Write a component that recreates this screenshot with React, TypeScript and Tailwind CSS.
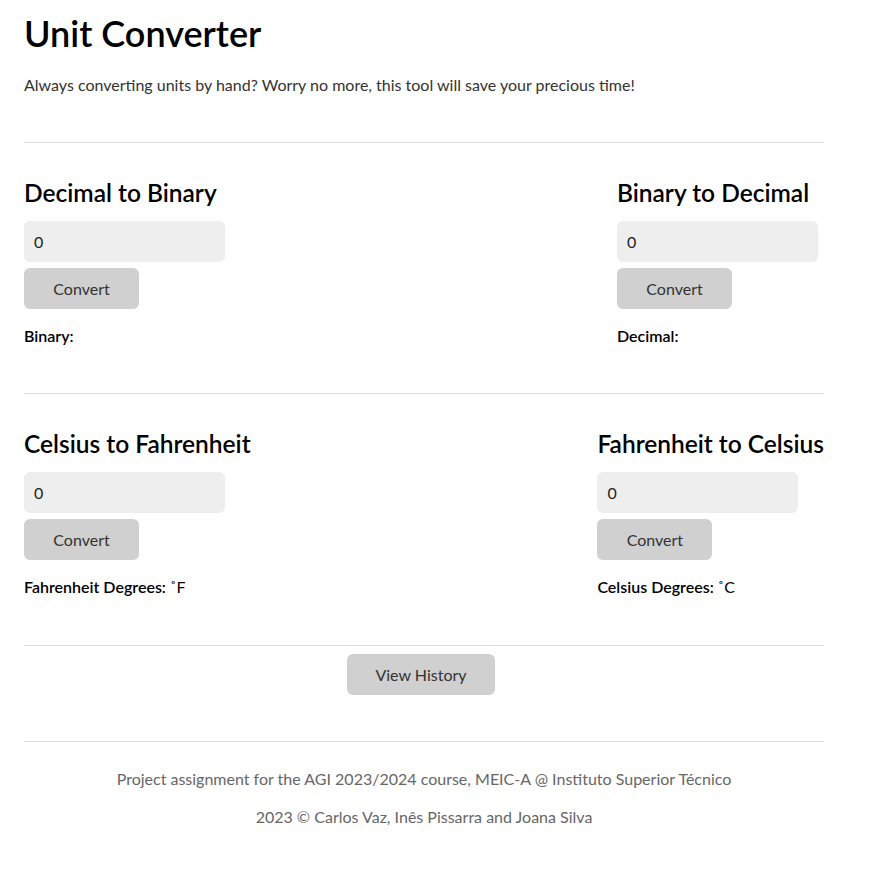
import { useState } from "react";

const font = "font-['Segoe_UI','Lato','Noto_Sans',sans-serif]";

type ConverterProps = {
  title: string;
  label: string;
  unit?: string;
  convert: (v: string) => string;
};

const Converter = ({ title, label, unit, convert }: ConverterProps) => {
  const [value, setValue] = useState("0");
  const [result, setResult] = useState("");

  return (
    <div className="flex flex-col">
      <h2 className="text-[24.5px] leading-8 font-semibold text-black">{title}</h2>
      <input
        value={value}
        onChange={(e) => setValue(e.target.value)}
        className="mt-3 w-[201px] h-[41px] rounded-md bg-[#eeeeee] px-[10px] text-[16px] text-[#222] outline-none"
      />
      <button
        onClick={() => setResult(convert(value))}
        className="mt-[6px] w-[115px] h-[41px] rounded-md bg-[#d0d0d0] text-[16px] text-[#333]"
      >
        Convert
      </button>
      <p className="mt-[15px] text-[16px] leading-6 text-black">
        <span className="font-semibold">{label}</span> {result}
        {unit}
      </p>
    </div>
  );
};

export default function App() {
  return (
    <div className={`${font} pl-6 w-[824px] text-[#222]`}>
      <h1 className="pt-[11px] text-[36px] leading-[44px] font-semibold text-black">
        Unit Converter
      </h1>
      <p className="mt-[18px] text-[16px] leading-6 text-[#333]">
        Always converting units by hand? Worry no more, this tool will save your precious time!
      </p>

      <hr className="mt-[45px] border-[#dddddd]" />
      <div className="flex justify-between items-start mt-[34px] pb-[45px]">
        <Converter
          title="Decimal to Binary"
          label="Binary:"
          convert={(v) => (parseInt(v, 10) || 0).toString(2)}
        />
        <div className="mr-[6px]">
          <Converter
            title="Binary to Decimal"
            label="Decimal:"
            convert={(v) => String(parseInt(v, 2) || 0)}
          />
        </div>
      </div>

      <hr className="border-[#dddddd]" />
      <div className="flex justify-between items-start mt-[34px] pb-[46px]">
        <Converter
          title="Celsius to Fahrenheit"
          label="Fahrenheit Degrees:"
          unit="˚F"
          convert={(v) => String(((parseFloat(v) || 0) * 9) / 5 + 32)}
        />
        <Converter
          title="Fahrenheit to Celsius"
          label="Celsius Degrees:"
          unit="˚C"
          convert={(v) => String((((parseFloat(v) || 0) - 32) * 5) / 9)}
        />
      </div>

      <hr className="border-[#dddddd]" />
      <div className="flex justify-center">
        <button className="mt-2 w-[148px] h-[41px] rounded-md bg-[#d0d0d0] text-[16px] text-[#333] -translate-x-[3px]">
          View History
        </button>
      </div>

      <hr className="mt-[46px] border-[#dddddd]" />
      <footer className="flex flex-col items-center text-[16px] leading-6 text-[#666]">
        <p className="mt-[25px]">
          Project assignment for the AGI 2023/2024 course, MEIC-A @ Instituto Superior Técnico
        </p>
        <p className="mt-[14px]">2023 © Carlos Vaz, Inês Pissarra and Joana Silva</p>
      </footer>
    </div>
  );
}
